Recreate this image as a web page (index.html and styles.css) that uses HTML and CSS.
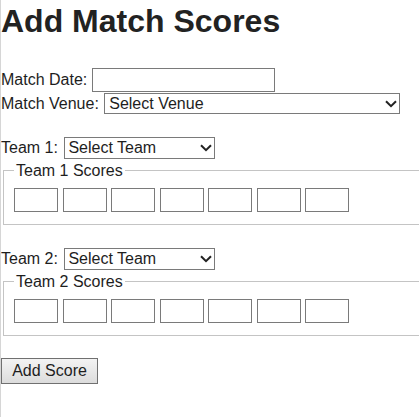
FILE: index.html
```html
<!DOCTYPE html>
<html>
<head>
<meta charset="utf-8">
<title>Add Match Scores</title>
<link rel="stylesheet" href="styles.css">
</head>
<body>
<h1 class="title">Add Match Scores</h1>
<form class="form">
  <div class="row row-date">
    <label class="label" for="date">Match Date:</label>
    <input class="text date" id="date" type="text">
  </div>
  <div class="row row-venue">
    <label class="label" for="venue">Match Venue:</label>
    <span class="sel-wrap">
      <select class="sel venue" id="venue"><option>Select Venue</option></select>
      <svg class="chev" width="12" height="8" viewBox="0 0 12 8"><path d="M1 1.2 L6 6.2 L11 1.2" fill="none" stroke="#222" stroke-width="2"/></svg>
    </span>
  </div>

  <div class="row row-team">
    <label class="label" for="team1">Team 1:</label>
    <span class="sel-wrap">
      <select class="sel team" id="team1"><option>Select Team</option></select>
      <svg class="chev" width="12" height="8" viewBox="0 0 12 8"><path d="M1 1.2 L6 6.2 L11 1.2" fill="none" stroke="#222" stroke-width="2"/></svg>
    </span>
  </div>
  <fieldset class="scores">
    <legend class="legend">Team 1 Scores</legend>
    <div class="boxes">
      <input class="text score" type="text"><input class="text score" type="text"><input class="text score" type="text"><input class="text score" type="text"><input class="text score" type="text"><input class="text score" type="text"><input class="text score" type="text">
    </div>
  </fieldset>

  <div class="row row-team">
    <label class="label" for="team2">Team 2:</label>
    <span class="sel-wrap">
      <select class="sel team" id="team2"><option>Select Team</option></select>
      <svg class="chev" width="12" height="8" viewBox="0 0 12 8"><path d="M1 1.2 L6 6.2 L11 1.2" fill="none" stroke="#222" stroke-width="2"/></svg>
    </span>
  </div>
  <fieldset class="scores">
    <legend class="legend">Team 2 Scores</legend>
    <div class="boxes">
      <input class="text score" type="text"><input class="text score" type="text"><input class="text score" type="text"><input class="text score" type="text"><input class="text score" type="text"><input class="text score" type="text"><input class="text score" type="text">
    </div>
  </fieldset>

  <button class="btn" type="button">Add Score</button>
</form>
</body>
</html>
```
FILE: styles.css
```css
html {
  overflow: hidden;
  background: #fff;
}
body {
  margin: 0;
  padding: 0;
  border-left: 1px solid #d6d6d6;
  min-height: 417px;
  box-sizing: border-box;
  font-family: "Liberation Sans", Arial, sans-serif;
  font-size: 16px;
  color: #1e1e1e;
}
.title {
  margin: 3px 0 0 0;
  font-size: 32px;
  line-height: 36px;
  font-weight: bold;
  color: #222;
}
.form {
  display: block;
}
.row {
  display: flex;
  align-items: center;
  gap: 4.4px;
}
.row-date {
  margin-top: 29px;
  height: 24px;
}
.row-venue {
  margin-top: 1px;
  height: 21px;
  gap: 5.4px;
}
.row-team {
  margin-top: 23px;
  height: 22px;
  gap: 6.5px;
}
.label {
  line-height: 18px;
  white-space: nowrap;
}
.text {
  box-sizing: border-box;
  border: 1px solid #7a7a7a;
  border-radius: 0;
  padding: 1px 3px;
  margin: 0;
  font-family: "Liberation Sans", Arial, sans-serif;
  font-size: 16px;
  background: #fff;
  outline: none;
}
.date {
  width: 183px;
  height: 24px;
}
.sel-wrap {
  position: relative;
  display: block;
}
.sel {
  -webkit-appearance: none;
  appearance: none;
  box-sizing: border-box;
  display: block;
  margin: 0;
  border: 1px solid #7a7a7a;
  border-radius: 0;
  background: #fff;
  font-family: "Liberation Sans", Arial, sans-serif;
  font-size: 16px;
  color: #1e1e1e;
  padding: 0 20px 0 4px;
}
.venue {
  width: 296px;
  height: 21px;
  line-height: 19px;
}
.team {
  width: 151px;
  height: 22px;
  line-height: 20px;
  padding-left: 3px;
}
.chev {
  position: absolute;
  right: 3px;
  top: 50%;
  margin-top: -4px;
  pointer-events: none;
}
.scores {
  box-sizing: border-box;
  margin: 2.5px 0 0 2px;
  width: 470px;
  border: 1px solid #c4c4c4;
  padding: 8.5px 10px 12px 10px;
  min-width: 0;
}
.legend {
  padding: 0 2px;
  line-height: 18px;
  color: #1e1e1e;
}
.boxes {
  display: flex;
  gap: 4.5px;
}
.score {
  width: 44px;
  height: 24px;
}
.btn {
  display: block;
  margin: 22px 0 0 0;
  box-sizing: border-box;
  width: 97px;
  height: 26px;
  padding: 0;
  border: 1px solid #707070;
  border-radius: 0;
  background: linear-gradient(#f3f3f3, #dcdcdc);
  font-family: "Liberation Sans", Arial, sans-serif;
  font-size: 16px;
  color: #1e1e1e;
  text-align: center;
}
```
